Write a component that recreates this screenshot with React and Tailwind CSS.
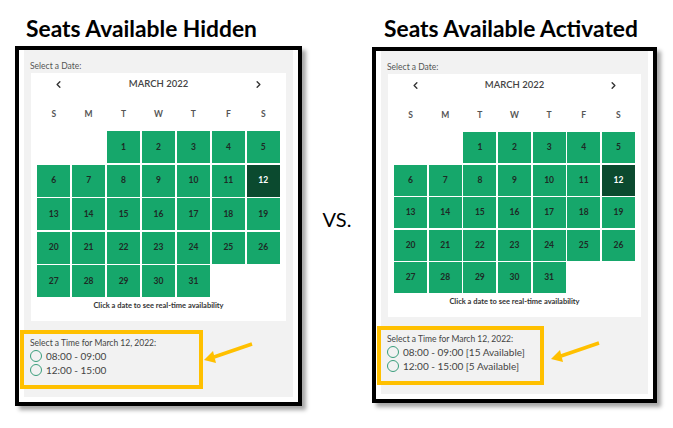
import { ChevronLeft, ChevronRight } from "lucide-react";

const dayLetters = ["S", "M", "T", "W", "T", "F", "S"];

// March 2022 starts on a Tuesday
const cells = [null, null, ...Array.from({ length: 31 }, (_, i) => i + 1)];

function Arrow({ pos }) {
  return (
    <svg className={`absolute ${pos}`} width="60" height="30" viewBox="0 0 60 30">
      <line x1="52" y1="6" x2="14" y2="19" stroke="#ffc000" strokeWidth="3.5" />
      <polygon points="4,22 16,25 13,13" fill="#ffc000" />
    </svg>
  );
}

function Panel({ size, rowH, slots, arrowPos, boxW }) {
  return (
    <div className={`relative border-4 border-black bg-white px-[5px] pb-[5px] shadow-[4px_4px_4px_rgba(0,0,0,0.35)] ${size}`}>
      <div className="h-full bg-[#f2f2f2] px-[7px] pt-[11px] font-['Lato',sans-serif]">
        <div className="-ml-[1px] text-[8.5px] leading-[10px] text-[#555]">Select a Date:</div>
        <div className="mt-[2px] bg-white px-[6px] pt-[5px] pb-[10px]">
          <div className="flex items-center justify-between px-[16px] h-[12px]">
            <ChevronLeft size={11} strokeWidth={3} color="#333" />
            <span className="text-[9.5px] font-semibold text-[#444]">MARCH 2022</span>
            <ChevronRight size={11} strokeWidth={3} color="#333" />
          </div>
          <div className="mt-[19px] grid grid-cols-7 gap-x-[1.5px] text-center text-[8.5px] font-bold text-[#555]">
            {dayLetters.map((d, i) => (
              <div key={i} className="leading-[10px]">{d}</div>
            ))}
          </div>
          <div className="mt-[12px] grid grid-cols-7 gap-[1.5px]">
            {cells.map((n, i) =>
              n === null ? (
                <div key={i} />
              ) : (
                <div
                  key={i}
                  className={`${rowH} flex items-center justify-center text-[8.5px] font-bold ${
                    n === 12 ? "bg-[#0b4a2f] text-white" : "bg-[#16a76b] text-[#1d2a25]"
                  }`}
                >
                  {n}
                </div>
              )
            )}
          </div>
          <div className="mt-[4px] text-center text-[7.5px] font-bold leading-[10px] text-[#333]">
            Click a date to see real-time availability
          </div>
        </div>
        <div className={`-ml-[11px] mt-[9px] border-4 border-[#ffc000] pl-[6px] pt-[4px] pb-[8px] ${boxW}`}>
          <div className="text-[8.5px] leading-[11px] text-[#444]">Select a Time for March 12, 2022:</div>
          {slots.map((s) => (
            <div key={s} className="flex items-center gap-[4px] h-[14px]">
              <span className="h-[12px] w-[12px] rounded-full border-[1.5px] border-[#3a9e7c]" />
              <span className="text-[10px] text-[#444]">{s}</span>
            </div>
          ))}
        </div>
      </div>
      <Arrow pos={arrowPos} />
    </div>
  );
}

export default function App() {
  return (
    <div className="h-[428px] w-[673px] overflow-hidden bg-white font-['Lato',sans-serif]">
      <div className="flex items-start pl-[15px]">
        <div>
          <h2 className="ml-[11px] mt-[17px] text-[22.8px] font-bold leading-[22px] text-black">Seats Available Hidden</h2>
          <div className="mt-[7px]">
            <Panel
              size="w-[287px] h-[360px]"
              rowH="h-[32px]"
              boxW="w-[183px]"
              slots={["08:00 - 09:00", "12:00 - 15:00"]}
              arrowPos="left-[181px] top-[288px]"
            />
          </div>
        </div>
        <div className="flex w-[70px] justify-center pt-[207px] text-[20px] leading-[24px] text-black">VS.</div>
        <div>
          <h2 className="ml-[12px] mt-[17px] text-[22.8px] font-bold leading-[22px] text-black">Seats Available Activated</h2>
          <div className="mt-[8px]">
            <Panel
              size="w-[285px] h-[356px]"
              rowH="h-[31px]"
              boxW="w-[167px]"
              slots={["08:00 - 09:00 [15 Available]", "12:00 - 15:00 [5 Available]"]}
              arrowPos="left-[171px] top-[286px]"
            />
          </div>
        </div>
      </div>
    </div>
  );
}
